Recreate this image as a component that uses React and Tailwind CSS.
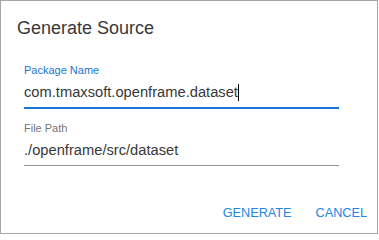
const font = { fontFamily: '"Liberation Sans", Arial, sans-serif' };

const TextField = ({ label, value, focused }) => (
    <div className="flex flex-col">
        <label className={`text-[11px] leading-[13px] ${focused ? 'text-[#1976d2]' : 'text-[#757575]'}`}>{label}</label>
        <div
            className={`flex items-center pb-[6px] mt-[6px] ${focused ? 'border-b-2 border-[#1976d2]' : 'border-b border-[#949494]'}`}
        >
            <span className="text-[14.7px] leading-[18px] text-[#383838] whitespace-nowrap">{value}</span>
            {focused && <span className="w-px h-[17px] bg-black" />}
        </div>
    </div>
);

export default function App() {
    return (
        <div style={font} className="w-[378px] h-[234px] bg-white border border-[#a6a6a6] flex flex-col">
            <h1 className="pt-[17px] pl-[16px] text-[18px] leading-[20px] text-[#383838] font-normal">Generate Source</h1>

            <div className="mt-[26px] ml-[23px] w-[315px] flex flex-col gap-[13px]">
                <TextField label="Package Name" value="com.tmaxsoft.openframe.dataset" focused />
                <TextField label="File Path" value="./openframe/src/dataset" />
            </div>

            <div className="mt-[39px] pr-[10px] flex justify-end gap-[24px]">
                <button type="button" className="text-[12.7px] leading-[16px] text-[#2186e5] uppercase">Generate</button>
                <button type="button" className="text-[12.7px] leading-[16px] text-[#2186e5] uppercase">Cancel</button>
            </div>
        </div>
    );
}
